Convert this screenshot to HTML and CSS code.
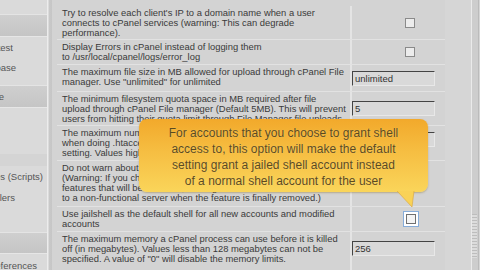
FILE: index.html
```html
<!DOCTYPE html>
<html>
<head>
<meta charset="utf-8">
<link rel="stylesheet" href="styles.css">
</head>
<body>
<div class="page">
  <div class="sidebar">
    <div class="sb sb-top"></div>
    <div class="sb sb-band"></div>
    <div class="sb sb-item sb-item1"><span>Install Latest</span></div>
    <div class="sb sb-item sb-item2"><span>Database</span></div>
    <div class="sb sb-band sb-band2"><span>Tweak Style</span></div>
    <div class="sb sb-gap"></div>
    <div class="sb sb-thin"></div>
    <div class="sb sb-item sb-item3"><span>Modules (Scripts)</span></div>
    <div class="sb sb-item sb-item4"><span>Resellers</span></div>
    <div class="sb sb-gap2"></div>
    <div class="sb sb-band sb-band3"></div>
    <div class="sb sb-item sb-item5"><span>Preferences</span></div>
  </div>
  <div class="divider"></div>
  <div class="main">
    <div class="table">
      <div class="row r1">
        <div class="label">Try to resolve each client's IP to a domain name when a user<br>connects to cPanel services (warning: This can degrade<br>performance).</div>
        <div class="value"><span class="cb"></span></div>
      </div>
      <div class="row r2">
        <div class="label">Display Errors in cPanel instead of logging them<br>to /usr/local/cpanel/logs/error_log</div>
        <div class="value"><span class="cb"></span></div>
      </div>
      <div class="row r3">
        <div class="label">The maximum file size in MB allowed for upload through cPanel File<br>manager. Use "unlimited" for unlimited</div>
        <div class="value"><span class="inp">unlimited</span></div>
      </div>
      <div class="row r4">
        <div class="label">The minimum filesystem quota space in MB required after file<br>upload through cPanel File manager (Default 5MB). This will prevent<br>users from hitting their quota limit through File Manager file uploads.</div>
        <div class="value"><span class="inp">5</span></div>
      </div>
      <div class="row r5">
        <div class="label">The maximum number of files to process<br>when doing .htaccess scans. Use 0 for the default<br>setting. Values higher than the default may be slow.</div>
        <div class="value"><span class="inp"></span></div>
      </div>
      <div class="row r6">
        <div class="label">Do not warn about deprecated features in cPanel.<br>(Warning: If you choose this, you may be using<br>features that will be removed, leading<br>to a non-functional server when the feature is finally removed.)</div>
        <div class="value"></div>
      </div>
      <div class="row r7">
        <div class="label">Use jailshell as the default shell for all new accounts and modified<br>accounts</div>
        <div class="value"><span class="cb focus"></span></div>
      </div>
      <div class="row r8">
        <div class="label">The maximum memory a cPanel process can use before it is killed<br>off (in megabytes). Values less than 128 megabytes can not be<br>specified. A value of "0" will disable the memory limits.</div>
        <div class="value"><span class="inp">256</span></div>
      </div>
    </div>
  </div>
  <div class="scroll">
    <div class="track"></div>
    <div class="grip"></div>
  </div>
  <div class="tip">
    <div class="tip-box">For accounts that you choose to grant shell<br>access to, this option will make the default<br>setting grant a jailed shell account instead<br>of a normal shell account for the user</div>
    <svg class="tail" width="20" height="18" viewBox="0 0 20 18"><polygon points="0,0 17,0 15,16" fill="#f9d257"/><polyline points="0,0 15,16 17,0" fill="none" stroke="#d9a53a" stroke-width="0.6"/></svg>
  </div>
</div>
</body>
</html>
```
FILE: styles.css
```css
html, body { margin: 0; padding: 0; }
body { width: 480px; height: 270px; overflow: hidden; background: #d3d3d3; font-family: "Liberation Sans", Arial, sans-serif; }
.page { position: relative; display: flex; width: 480px; height: 270px; overflow: hidden; }
.sidebar { width: 47px; flex: none; background: #dadada; display: flex; flex-direction: column; }
.sb { overflow: hidden; white-space: nowrap; display: flex; justify-content: flex-end; align-items: center; font-size: 9.5px; color: #555; flex: none; }
.sb-top { height: 14px; }
.sb-band { height: 21px; background: linear-gradient(#cfcfcf, #c5c5c5); border-top: 1px solid #e4e4e4; border-bottom: 1px solid #e6e6e6; }
.sb-item { height: 20px; }
.sb-item1 { margin-top: 1px; height: 19px; }
.sb-item1 span { margin-right: 34px; }
.sb-item2 span { margin-right: 31px; }
.sb-band2 { height: 21px; margin-top: 8px; }
.sb-band2 span { margin-right: 43px; }
.sb-gap { height: 46px; }
.sb-thin { height: 12px; background: #d4d4d4; }
.sb-item3 span { margin-right: 4px; }
.sb-item4 { height: 22px; }
.sb-item4 span { margin-right: 32px; }
.sb-gap2 { height: 24px; }
.sb-band3 { height: 20px; }
.sb-item5 { height: 22px; }
.sb-item5 span { margin-right: 10px; }
.divider { width: 5px; flex: none; background: linear-gradient(90deg, #ececec 0, #ececec 1px, #c9c9c9 2px, #c6c6c6 5px); }
.main { width: 388px; flex: none; padding-left: 5px; padding-top: 6px; }
.table { display: flex; flex-direction: column; }
.row { display: flex; border-bottom: 1px solid #e2e2e2; box-sizing: border-box; }
.label { width: 293px; padding: 2px 3px 0 5px; box-sizing: border-box; font-size: 9.4px; line-height: 10px; color: #3a3a3a; flex: none; white-space: nowrap; overflow: hidden; }
.value { width: 87px; flex: none; border-left: 2px solid #e4e4e4; display: flex; align-items: center; justify-content: flex-start; }
.r1 { height: 34px; }
.r2 { height: 25px; }
.r3 { height: 27px; }
.r4 { height: 34px; }
.r5 { height: 35px; }
.r6 { height: 46px; }
.r7 { height: 25px; }
.r8 { height: 40px; }
.r5 .value { align-items: flex-start; padding-top: 6px; box-sizing: border-box; }
.r8 .value { align-items: flex-start; padding-top: 9px; box-sizing: border-box; }
.cb { display: block; width: 8px; height: 8px; border: 1px solid #8a8a8a; background: #ececec; margin-left: 53px; }
.cb.focus { margin-left: 54px; background: #f4f4f4; border-color: #707070; box-shadow: 0 0 0 2px #fff, 0 0 0 3px #86acd9; }
.inp { display: block; width: 79px; height: 13px; margin-left: 0; border-top: 1px solid #444; border-left: 1px solid #444; border-right: 1px solid #e8e8e8; border-bottom: 1px solid #e8e8e8; background: #d9d9d9; font-size: 9.5px; line-height: 13px; color: #333; padding-left: 2px; }
.scroll { position: relative; flex: 1; background: #d6d6d6; }
.track { position: absolute; left: 26px; top: 0; width: 6px; height: 270px; border-left: 1px solid #eaeaea; border-right: 1px solid #bbb; background: #cdcdcd; }
.grip { position: absolute; left: 27px; top: 214px; width: 5px; height: 44px; background: repeating-linear-gradient(#bdbdbd 0, #bdbdbd 1px, #dcdcdc 1px, #dcdcdc 3px); }
.tip { position: absolute; left: 139px; top: 119px; width: 289px; }
.tip-box { height: 73px; box-sizing: border-box; border-radius: 8px; background: linear-gradient(#f2a92b 0%, #f6be42 45%, #fad55a 100%); box-shadow: 0 1px 2px rgba(120,90,0,0.35); color: #5c4a1e; font-size: 12px; line-height: 16px; text-align: center; padding: 6px 0 0 0; white-space: nowrap; text-shadow: 0 0 1px rgba(255,230,150,0.6); }
.tail { position: absolute; left: 258px; top: 72px; display: block; }
```
